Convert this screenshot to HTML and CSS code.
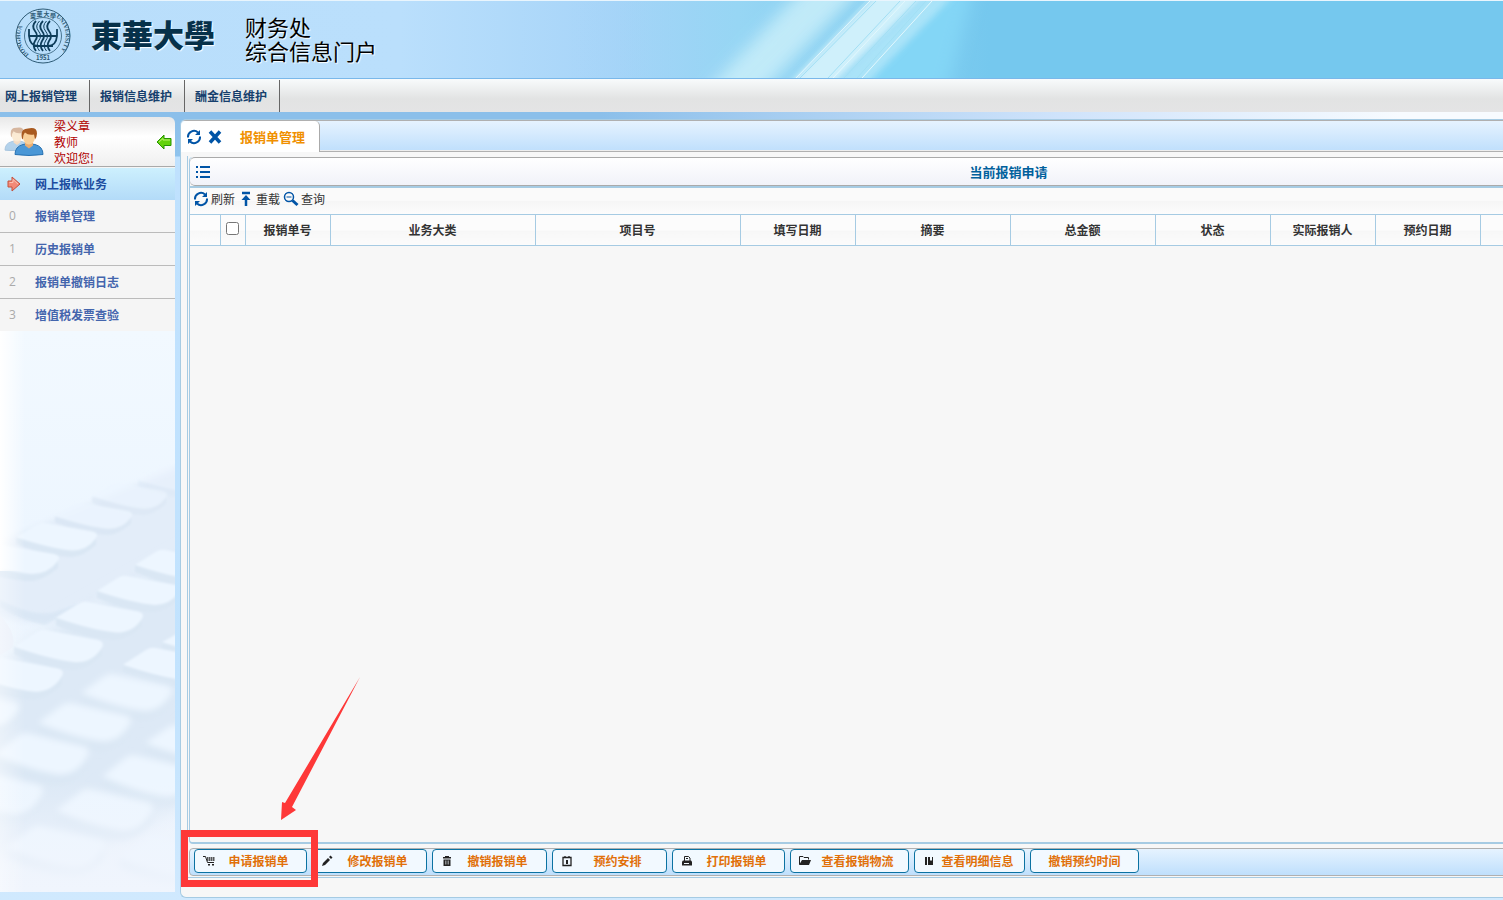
FILE: index.html
```html
<!DOCTYPE html>
<html lang="zh-CN">
<head>
<meta charset="utf-8">
<title>财务处综合信息门户</title>
<link rel="stylesheet" href="styles.css">
</head>
<body>
<svg class="defs" aria-hidden="true">
  <symbol id="refresh" viewBox="0 0 16 16"><path d="M2 8.500A6 6 0 0 1 12 3.500M14 7.500A6 6 0 0 1 4 12.500" fill="none" stroke="currentColor" stroke-width="2"/><path d="M14 1v5H9zM2 15v-5h5z" fill="currentColor"/></symbol>
  <symbol id="key" viewBox="0 0 90 38" preserveAspectRatio="none"><path d="M0 16V23Q36 37 62 37Q74 36 88 24V14Z" fill="#dae7f4"/><path d="M0 16L22 3Q27 0 32 1L84 10Q92 12 87 18Q78 30 62 30Q38 28 0 16Z" fill="#edf6ff"/></symbol>
  <symbol id="person" viewBox="0 0 30 28"><path d="M1 27Q1 19 9 17L14 16 21 17Q29 19 29 27Q15 29 1 27Z" fill="#4a97d6" stroke="#2872b2"/><path d="M11 13h8v5l-4 3-4-3z" fill="#e9ad72"/><ellipse cx="15" cy="9.500" rx="6" ry="7.500" fill="#f9cf98"/><path d="M8 11Q6 1 14 1Q23-1 23 6Q23 9 21 12L20 7Q14 8 11 5Q9 7 9 12Z" fill="#a95a20"/></symbol>
</svg>

<header class="banner">
  <svg class="rays" viewBox="0 0 420 77" preserveAspectRatio="none" aria-hidden="true">
    <defs>
      <linearGradient id="rg"><stop offset="0" stop-color="#a6d4f8" stop-opacity="0"/><stop offset=".4" stop-color="#97d6f4"/><stop offset="1" stop-color="#75c8ee"/></linearGradient>
      <filter id="soft" x="-50%" y="-50%" width="200%" height="200%"><feGaussianBlur stdDeviation="8"/></filter>
      <filter id="soft2" x="-20%" y="-20%" width="140%" height="140%"><feGaussianBlur stdDeviation="3"/></filter>
    </defs>
    <rect width="420" height="77" fill="url(#rg)"/>
    <path d="M265 97L370 -20H405L375 97Z" fill="#83d6f6" filter="url(#soft)"/>
    <path d="M130 97L240 -20H300L185 97Z" fill="#c6edf9" opacity=".9" filter="url(#soft)"/>
    <path d="M205 97L318 -20H371L250 97Z" fill="#cff0fb" filter="url(#soft2)"/>
    <path d="M250 97L371 -20H398L283 97Z" fill="#b4e7f9" opacity=".8" filter="url(#soft2)"/>
    <path d="M222 77L296 0M230 77L306 0M258 77L330 0M274 77L346 0M287 77L356 0" stroke="#a2dff4"/>
    <path d="M226 77L300 0M263 77L335 0M292 77L362 0" stroke="#e2f7fd"/>
  </svg>
  <svg class="seal" viewBox="0 0 56 56" role="img" aria-label="东华大学校徽">
    <g fill="none" stroke="#2d5a75"><circle cx="28" cy="28" r="27"/><circle cx="28" cy="28" r="18.500" stroke-width=".8"/></g>
    <path id="arcL" d="M14 46.500A23 23 0 0 1 15 9.500" fill="none"/><path id="arcR" d="M41 9A23 23 0 0 1 42 46" fill="none"/>
    <g class="seal-text"><text><textPath href="#arcL">DONGHUA</textPath></text><text><textPath href="#arcR">UNIVERSITY</textPath></text></g>
    <g class="seal-cn"><text x="15" y="10">東</text><text x="21.500" y="8">華</text><text x="28.500" y="8">大</text><text x="35" y="10">學</text><text x="21" y="52">1951</text></g>
    <path d="M14 21v7q1 10 9 10h10q8 0 9-10v-7M14 28h28M18 38h20M21 13q-5 5-1 10t0 10q-3 5 1 10M28 13q-5 5-1 10t0 10q-3 5 1 10M35 13q-5 5-1 10t0 10q-3 5 1 10" fill="none" stroke="#0e3d5a" stroke-width="1.800"/>
    <path d="M24.500 13q-5 5-1 10t0 10q-3 5 1 10M31.500 13q-5 5-1 10t0 10q-3 5 1 10" fill="none" stroke="#0e3d5a" stroke-width="1"/>
  </svg>
  <span class="school">東華大學</span>
  <h1 class="portal"><span>财务处</span><span>综合信息门户</span></h1>
</header>

<nav class="menu">
  <a href="#">网上报销管理</a><a href="#">报销信息维护</a><a href="#">酬金信息维护</a>
</nav>

<div class="body">
  <aside class="side">
    <div class="user">
      <svg class="avatar" viewBox="0 0 40 32" aria-hidden="true"><use href="#person" x="0" y="1" width="26" height="24" opacity=".4"/><use href="#person" x="10" y="1" width="30" height="29"/></svg>
      <div class="who">梁义章<br>教师<br>欢迎您!</div>
      <button class="collapse" aria-label="收起"><svg viewBox="0 0 16 16"><path d="M1 8L8 1V4.500H15V11.500H8V15Z" fill="#63d20b" stroke="#279400"/><path d="M3 8L7 4.500V6H14" fill="none" stroke="#b9f36b"/></svg></button>
    </div>
    <ul class="tree">
      <li class="on"><a href="#"><svg viewBox="0 0 16 16" aria-hidden="true"><path d="M2 5H6V1L14 8L6 15V11H2Z" fill="#f28a78" stroke="#c4503d"/><path d="M3.500 6.500H7V3.500L12 8" fill="none" stroke="#fbc3b5"/></svg>网上报帐业务</a></li>
      <li><a href="#"><i>0</i>报销单管理</a></li>
      <li><a href="#"><i>1</i>历史报销单</a></li>
      <li><a href="#"><i>2</i>报销单撤销日志</a></li>
      <li><a href="#"><i>3</i>增值税发票查验</a></li>
    </ul>
    <svg class="keys" viewBox="0 331 175 561" preserveAspectRatio="none" aria-hidden="true">
      <defs><linearGradient id="kb" x2="0" y2="1"><stop offset="0" stop-color="#f2f9ff"/><stop offset=".35" stop-color="#edf6ff"/><stop offset="1" stop-color="#ecf3fc"/></linearGradient>
      <linearGradient id="kl"><stop offset="0" stop-color="#fff"/><stop offset="1" stop-color="#fff" stop-opacity="0"/></linearGradient>
      <linearGradient id="kf" x2="0" y2="1"><stop offset="0" stop-color="#f0f5fd" stop-opacity="0"/><stop offset="1" stop-color="#f0f5fd"/></linearGradient>
      <filter id="b1"><feGaussianBlur stdDeviation="1"/></filter><filter id="b2" x="-20%" y="-20%" width="140%" height="140%"><feGaussianBlur stdDeviation="3"/></filter><filter id="b3" x="-20%" y="-20%" width="140%" height="140%"><feGaussianBlur stdDeviation="8"/></filter></defs>
      <rect y="331" width="175" height="561" fill="url(#kb)"/>
      <path d="M-20 550L195 460V550L60 620Q40 628 -20 612Z" fill="#e3edf9" filter="url(#b2)"/>
      <path d="M40 635L200 545V800L90 850L-20 860V680Z" fill="#dde9f6" filter="url(#b3)"/>
      <path d="M0 607Q20 620 45 625L85 602L60 610Q40 620 0 600Z" fill="#d5e4f3" opacity=".6" filter="url(#b1)"/>
      <path d="M0 615Q18 635 12 648L0 655Z" fill="#eaf0fa"/>
      <g filter="url(#b1)">
        <use href="#key" x="138" y="466" width="84" height="34" opacity=".4"/><use href="#key" x="92" y="482" width="76" height="34" opacity=".6"/><use href="#key" x="55" y="502" width="78" height="34" opacity=".8"/><use href="#key" x="16" y="522" width="82" height="36"/><use href="#key" x="-30" y="544" width="90" height="38"/>
        <use href="#key" x="135" y="549" width="84" height="38"/><use href="#key" x="97" y="575" width="84" height="38"/><use href="#key" x="56" y="601" width="88" height="40"/><use href="#key" x="14" y="629" width="90" height="42"/><use href="#key" x="-28" y="657" width="92" height="44"/>
        <use href="#key" x="162" y="628" width="84" height="34"/><use href="#key" x="123" y="647" width="92" height="42"/>
      </g>
      <g filter="url(#b2)"><use href="#key" x="81" y="673" width="92" height="48"/><use href="#key" x="38" y="702" width="94" height="50"/><use href="#key" x="-6" y="732" width="96" height="54"/><use href="#key" x="-52" y="770" width="96" height="56"/><use href="#key" x="-70" y="690" width="90" height="46"/><use href="#key" x="145" y="724" width="92" height="46"/><use href="#key" x="102" y="754" width="94" height="54"/><use href="#key" x="56" y="788" width="98" height="54"/><use href="#key" x="6" y="825" width="100" height="54"/><use href="#key" x="120" y="836" width="104" height="54"/></g>
      <rect y="780" width="175" height="112" fill="url(#kf)"/>
      <rect y="331" width="25" height="240" fill="url(#kl)"/>
      <rect y="571" width="25" height="321" fill="url(#kl)" opacity=".4"/>
    </svg>
  </aside>

  <main class="panel">
    <div class="tabs">
      <div class="tab">
        <button class="icon" aria-label="刷新页签"><svg><use href="#refresh"/></svg></button>
        <button class="icon" aria-label="关闭"><svg viewBox="0 0 16 16"><path d="M3 2.500L13 13.500M13 2.500L3 13.500" stroke="currentColor" stroke-width="3.500"/></svg></button>
        <span>报销单管理</span>
      </div>
    </div>
    <div class="frame">
      <div class="work">
        <section class="grid">
          <div class="title"><svg viewBox="0 0 14 14" aria-hidden="true"><path d="M0 2h2M4 2h10M0 7h2M4 7h10M0 12h2M4 12h10" stroke="currentColor" stroke-width="2"/></svg><h2>当前报销申请</h2></div>
          <div class="tools">
            <button><svg><use href="#refresh"/></svg>刷新</button>
            <button><svg viewBox="0 0 16 16"><path d="M4 2h8M8 15V7" stroke="currentColor" stroke-width="2.500"/><path d="M3.500 9L8 4L12.500 9Z" fill="currentColor"/></svg>重载</button>
            <button><svg viewBox="0 0 16 16"><circle cx="6" cy="6" r="4.500" fill="none" stroke="currentColor" stroke-width="1.500"/><path d="M3.500 6h5" stroke="currentColor"/><path d="M9.500 9.500L14.500 14" stroke="currentColor" stroke-width="3"/></svg>查询</button>
          </div>
          <table>
            <colgroup><col class="c30"><col class="c25"><col class="c85"><col class="c205"><col class="c205"><col class="c115"><col class="c155"><col class="c145"><col class="c115"><col class="c105"><col class="c105"><col></colgroup>
            <thead><tr><th></th><th><input type="checkbox" aria-label="全选"></th><th>报销单号</th><th>业务大类</th><th>项目号</th><th>填写日期</th><th>摘要</th><th>总金额</th><th>状态</th><th>实际报销人</th><th>预约日期</th><th></th></tr></thead>
          </table>
        </section>
        <div class="actions">
          <button class="w113"><svg viewBox="0 0 12 12"><path d="M0 1.500h2.500l2 6h6.500" fill="none" stroke="currentColor"/><path d="M4 3h8M4 5h8" stroke="currentColor" stroke-width="1.500" stroke-dasharray="1.500 .5"/><path d="M5 9h2v1.500H5zM9 9h2v1.500H9z"/></svg><span>申请报销单</span></button>
          <button class="w115"><svg viewBox="0 0 12 12"><path d="M1 11l1-3 5-5 2 2-5 5zM8 2l1.500-1.500 2 2L10 4z"/></svg><span>修改报销单</span></button>
          <button class="w115"><svg viewBox="0 0 12 12"><path d="M2 2h2V1h4v1h2v1.500H2z"/><path d="M2.500 4.500h7V11h-7z"/><path d="M4.500 5.500v4M6 5.500v4M7.500 5.500v4" stroke="#f2f9ff" stroke-width=".5"/></svg><span>撤销报销单</span></button>
          <button class="w115"><svg viewBox="0 0 12 12"><path d="M2 2.500h8v8H2zM4 1v2M8 1v2" fill="none" stroke="currentColor" stroke-width="1.300"/><path d="M5 5h2v4H5z"/></svg><span>预约安排</span></button>
          <button class="w113"><svg viewBox="0 0 12 12"><path d="M3.500 6V1.500h4L9 3v3" fill="none" stroke="currentColor"/><path d="M2 5.500h8l1 1v4H1v-4z"/><path d="M3 8.500h5" stroke="#f2f9ff"/><path d="M5 3.500h2" stroke="currentColor"/></svg><span>打印报销单</span></button>
          <button class="w119"><svg viewBox="0 0 12 12"><path d="M.5 9.500v-8h3.500l1 1h4.500V4.500" fill="none" stroke="currentColor"/><path d="M3 5h9l-2 5H0z"/></svg><span>查看报销物流</span></button>
          <button class="w111"><svg viewBox="0 0 12 12"><path d="M2 2h2v8H2zM5 2h5v8H5z"/><path d="M7 2h2v4L8 5 7 6z" fill="#f2f9ff"/></svg><span>查看明细信息</span></button>
          <button class="w109"><span>撤销预约时间</span></button>
        </div>
      </div>
    </div>
  </main>
</div>

<div class="mark" aria-hidden="true">
  <svg viewBox="0 0 80 144"><path d="M79 0L11 130L15 133L0 143L1 125L4 126Z"/></svg>
  <div class="mark-box"></div>
</div>
</body>
</html>
```

FILE: styles.css
```css
* { box-sizing: border-box; }
body { margin: 0; height: 100vh; display: flex; flex-direction: column; position: relative; overflow: hidden; font: 12px/16px "Noto Sans CJK SC", sans-serif; background: #d0e9fe; color: #333; }
button { font: inherit; color: inherit; margin: 0; padding: 0; border: 0; background: none; cursor: pointer; }
a { color: inherit; text-decoration: none; }
svg { display: block; }
.defs { position: absolute; width: 0; height: 0; }

.banner { position: relative; flex: none; height: 79px; display: flex; align-items: center; padding: 0 0 8px 15px; border-top: 1px solid #e9f5fd; border-bottom: 1px solid #7ab8ea; background: linear-gradient(90deg, #b9defb 0, #badffc 400px, #a6d4f8 620px, #93d1f2 760px, #75c8ee 990px); }
.rays { position: absolute; left: 570px; top: 0; width: 420px; height: 77px; }
.seal { width: 56px; height: 56px; position: relative; }
.seal-text { font: bold 6px "Liberation Serif", serif; fill: #2d5a75; }
.seal-cn { font: bold 6px "Noto Sans CJK TC", sans-serif; fill: #2d5a75; }
.school { margin: 0 0 4px 20px; font: 900 31px/40px "Noto Sans CJK TC", sans-serif; color: #06314a; text-shadow: 1px 1px 1px #fff; }
.portal { margin: 4px 0 0 30px; font-size: 22px; line-height: 24px; font-weight: 400; color: #000; text-shadow: 1px 1px 1px #fff; }
.portal span { display: block; }

.menu { flex: none; display: flex; height: 33px; padding-top: 1px; background: linear-gradient(#f8fbfc, #e2e3e3 60%, #e4e4e5); }
.menu a { padding: 8px 12px 0 10px; border-right: 1px solid #666; font-weight: 700; color: #163f6d; }
.menu a:first-child { padding-left: 5px; }

.body { flex: 1; min-height: 0; display: flex; gap: 5px; background: linear-gradient(90deg, #8bbfea 0, #8bbfea 600px, #cfe3fb 1060px, #f7fbff 1400px) 0 0 / 100% 8px no-repeat, linear-gradient(#8bbfea 0, #8fc3ed 44px, #bfe1fe 45px, #c2e3fe 75%, #d0e9fe); }
.side { flex: none; width: 175px; display: flex; flex-direction: column; padding: 5px 0 8px; }
.user { display: flex; height: 50px; padding-left: 4px; align-items: center; border-bottom: 1px solid #aaa; border-radius: 0 6px 0 0; background: linear-gradient(#e8e8e8, #fff 40%, #f0f0f0); }
.avatar { width: 40px; height: 32px; }
.who { flex: 1; padding-left: 10px; color: #b00000; }
.collapse { width: 16px; height: 16px; margin-right: 3px; }
.tree { list-style: none; margin: 0; padding: 1px 0 0; background: #f5f5f5; }
.tree li { height: 33px; border-bottom: 1px solid #bbb; }
.tree li:last-child { height: 32px; border: 0; }
.tree .on { height: 32px; border: 0; background: linear-gradient(#cdf0fe, #b3dbf8); }
.tree a { display: flex; align-items: center; height: 100%; padding-left: 6px; font-weight: 700; color: #4465ad; }
.tree .on a { color: #1c4c9f; }
.tree svg { width: 16px; height: 16px; margin-right: 13px; }
.tree i { width: 26px; padding-left: 3px; margin-right: 3px; font: 12px/16px "Open Sans", sans-serif; color: #aaa; }
.keys { flex: 1; width: 100%; min-height: 0; }

.panel { flex: 1; min-width: 0; display: flex; flex-direction: column; margin: 7px 0 2px; border: 1px solid #a6cbe3; border-right: 0; border-radius: 6px 0 0 6px; overflow: hidden; background: #f7f7f7; }
.tabs { flex: none; display: flex; height: 32px; border-top: 1px solid #b0b0b0; border-bottom: 1px solid #b0b0b0; background: linear-gradient(#e6f3ff, #bfdffc); box-shadow: inset 0 -1px #eee; }
.tab { display: flex; align-items: center; gap: 5px; height: 31px; padding: 0 14px 0 5px; background: #fff; border-right: 1px solid #aaa; border-radius: 5px 5px 0 0; color: #0054a6; }
.tab span { margin-left: 12px; font-size: 13px; font-weight: 700; color: #f09000; }
.icon svg { width: 16px; height: 16px; }
.frame { flex: 1; min-height: 0; margin: 4px 0 19px 6px; border-left: 1px solid #a6cbe3; border-bottom: 1px solid #a6cbe3; padding: 1px 0 1px 1px; }
.work { width: 1640px; height: 100%; display: flex; flex-direction: column; gap: 4px; }
.grid { flex: 1; min-height: 0; border-left: 1px solid #a6cbe3; border-bottom: 2px solid #a6cbe3; border-radius: 4px; }
.title { display: flex; align-items: center; height: 29px; padding-left: 6px; border-top: 1px solid #aaa; border-bottom: 1px solid #aaa; border-radius: 5px 0 0 5px; background: linear-gradient(#fff, #f1f2f9); color: #0054a6; }
.title svg { width: 14px; height: 14px; }
.title h2 { flex: 1; margin: 0 22px 0 0; text-align: center; font-size: 13px; line-height: 16px; color: #00609c; }
.tools { display: flex; height: 28px; gap: 3px; padding: 3px 3px 0; align-items: flex-start; border-top: 2px solid #a6cbe3; background: linear-gradient(#fafafa 50%, #f6f6f6 50%, #fcfcfc); }
.tools button { display: flex; align-items: center; gap: 2px; height: 16px; }
.tools svg { width: 16px; height: 16px; color: #0054a6; }
table { width: 100%; table-layout: fixed; border-collapse: collapse; }
th { height: 31px; padding: 0; border: 1px solid #a6cbe3; border-left: 0; background: linear-gradient(#fcfcfc 50%, #f7f7f7 50%, #fcfcfc); }
th input { display: block; width: 13px; height: 13px; margin: 0 auto 3px; }
.c25 { width: 25px; } .c30 { width: 30px; } .c85 { width: 85px; } .c105 { width: 105px; } .c115 { width: 115px; }
.c145 { width: 145px; } .c155 { width: 155px; } .c205 { width: 205px; }
.actions { flex: none; display: flex; gap: 5px; height: 28px; padding: 0 4px; border: 1px solid #b0b0b0; border-radius: 4px; background: linear-gradient(#e6f3ff, #bfdffc); }
.actions button { display: flex; align-items: center; gap: 4px; height: 24px; padding: 0 8px; border: 1px solid #0b72a2; border-radius: 4px; background: #f2f9ff; color: #e17009; font-weight: 700; }
.actions svg { width: 12px; height: 12px; color: #222; fill: #222; }
.actions span { flex: 1; text-align: center; white-space: nowrap; }
.w109 { width: 109px; } .w111 { width: 111px; } .w113 { width: 113px; } .w115 { width: 115px; } .w119 { width: 119px; }

.mark { position: absolute; left: 181px; bottom: 13px; width: 179px; pointer-events: none; }
.mark svg { width: 80px; height: 144px; margin: 0 0 9px 100px; fill: #fe3838; }
.mark-box { width: 137px; height: 57px; border: 7px solid #fe3838; }
```
